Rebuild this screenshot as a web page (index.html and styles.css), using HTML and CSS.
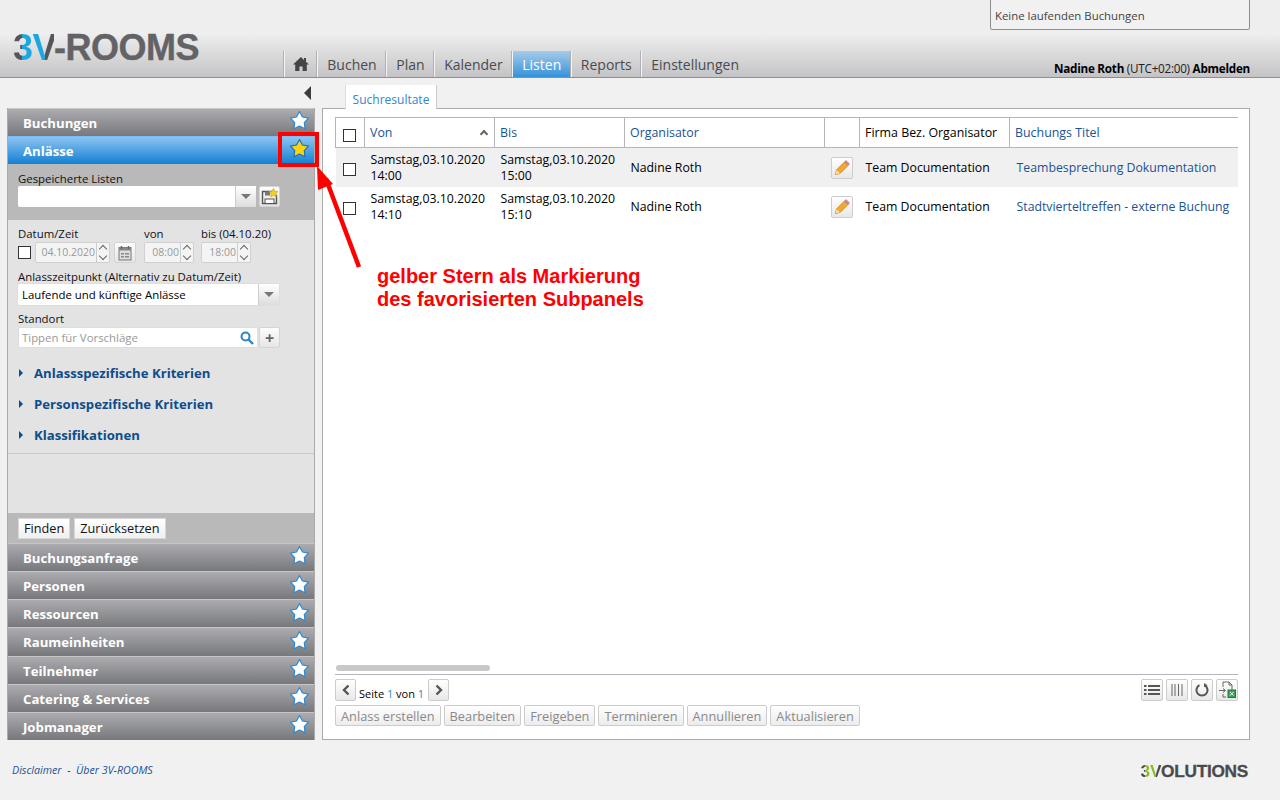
FILE: index.html
```html
<!DOCTYPE html>
<html lang="de">
<head>
<meta charset="UTF-8">
<title>3V-ROOMS</title>
<link rel="stylesheet" href="styles.css">
</head>
<body>
<svg class="defs" width="0" height="0">
  <symbol id="star" viewBox="0 0 20 20"><polygon points="10,1.500 12.820,6.620 18.560,7.720 14.560,11.980 15.290,17.780 10,15.300 4.710,17.780 5.440,11.980 1.440,7.720 7.180,6.620" stroke-width="1.100" stroke-linejoin="round"/></symbol>
  <symbol id="pencil" viewBox="0 0 16 16"><path d="M1.500 14.500l1-4.500 8-8 3.500 3.500-8 8z" fill="#f3a92f" stroke="#c9801a" stroke-width=".9"/><path d="M10.800 1.800l1.200-1.200 3.400 3.400-1.200 1.200z" fill="#d98bb0" stroke="#a86a88" stroke-width=".7"/><path d="M1.500 14.500l1-4.500 3.500 3.500z" fill="#f6dcae"/></symbol>
</svg>

<header class="top">
  <div class="logo"><span class="logo-three">3</span><span class="logo-v">V</span>-ROOMS</div>
  <nav class="nav">
    <a class="nav-item nav-home"><svg width="16" height="14" viewBox="0 0 16 14"><path d="M8 0L0 7.500h2.200V14h4.200V9.500h3.200V14h4.200V7.500H16L13 4.700V1h-2v1.900z" fill="#444"/></svg></a>
    <a class="nav-item">Buchen</a>
    <a class="nav-item">Plan</a>
    <a class="nav-item">Kalender</a>
    <a class="nav-item active">Listen</a>
    <a class="nav-item">Reports</a>
    <a class="nav-item">Einstellungen</a>
  </nav>
  <div class="user"><b>Nadine Roth</b> (UTC+02:00) <b>Abmelden</b></div>
  <div class="running">Keine laufenden Buchungen</div>
</header>

<div class="subbar">
  <div class="collapse-col"><span class="collapse"></span></div>
  <div class="tab">Suchresultate</div>
</div>

<main class="main">
  <aside class="side">
    <div class="acc"><span>Buchungen</span><svg class="star"><use href="#star"/></svg></div>
    <div class="acc acc-active"><span>Anlässe</span><svg class="star star-fav"><use href="#star"/></svg></div>

    <div class="saved">
      <label class="lbl">Gespeicherte Listen</label>
      <div class="row">
        <div class="combo combo-saved"><span class="combo-text"></span><span class="combo-btn"><i class="caret"></i></span></div>
        <button class="icon-btn save-btn">
          <svg width="18" height="18" viewBox="0 0 18 18"><path d="M1.500 3.500h9l5 4v8h-14z" fill="#eee" stroke="#555" stroke-width="1.400"/><rect x="4" y="3.500" width="5" height="4" fill="#777"/><rect x="4" y="11" width="9" height="4.500" fill="#fff" stroke="#555"/><polygon points="12.500,0.500 13.800,3.200 17,3.600 14.700,5.700 15.300,8.800 12.500,7.300 9.700,8.800 10.300,5.700 8,3.600 11.200,3.200" fill="#f7d21c" stroke="#c9a414" stroke-width=".7"/></svg>
        </button>
      </div>
    </div>

    <div class="criteria">
      <div class="date-labels">
        <label class="lbl lbl-date">Datum/Zeit</label>
        <label class="lbl lbl-von">von</label>
        <label class="lbl">bis (04.10.20)</label>
      </div>
      <div class="row date-row">
        <span class="check"></span>
        <div class="spin spin-date"><span class="spin-val">04.10.2020</span><span class="spin-btns"><i class="up"></i><i class="down"></i></span></div>
        <button class="icon-btn cal-btn">
          <svg width="14" height="16" viewBox="0 0 14 16"><rect x="1" y="2.500" width="12" height="12.500" fill="#ddd" stroke="#777"/><rect x="1" y="2.500" width="12" height="3" fill="#888"/><path d="M3.500 1v3M10.500 1v3" stroke="#666" stroke-width="1.400"/><path d="M3 8h3v1.500H3zM7 8h4v1.500H7zM3 11h3v1.500H3zM7 11h4v1.500H7z" fill="#888"/></svg>
        </button>
        <div class="spin spin-time"><span class="spin-val">08:00</span><span class="spin-btns"><i class="up"></i><i class="down"></i></span></div>
        <div class="spin spin-time spin-to"><span class="spin-val">18:00</span><span class="spin-btns"><i class="up"></i><i class="down"></i></span></div>
      </div>

      <label class="lbl lbl-next">Anlasszeitpunkt (Alternativ zu Datum/Zeit)</label>
      <div class="combo combo-wide"><span class="combo-text">Laufende und künftige Anlässe</span><span class="combo-btn"><i class="caret"></i></span></div>

      <label class="lbl lbl-next">Standort</label>
      <div class="row search-row">
        <div class="search">
          <span>Tippen für Vorschläge</span>
          <svg width="14" height="14" viewBox="0 0 14 14"><circle cx="5.500" cy="5.500" r="4" fill="none" stroke="#2b86c5" stroke-width="2"/><path d="M8.500 8.500L13 13" stroke="#2b86c5" stroke-width="2.400"/></svg>
        </div>
        <button class="icon-btn plus-btn">+</button>
      </div>

      <ul class="crit-list">
        <li><i class="tri"></i>Anlassspezifische Kriterien</li>
        <li><i class="tri"></i>Personspezifische Kriterien</li>
        <li><i class="tri"></i>Klassifikationen</li>
      </ul>
    </div>

    <div class="find-bar">
      <button class="plain-btn">Finden</button>
      <button class="plain-btn">Zurücksetzen</button>
    </div>

    <div class="acc"><span>Buchungsanfrage</span><svg class="star"><use href="#star"/></svg></div>
    <div class="acc"><span>Personen</span><svg class="star"><use href="#star"/></svg></div>
    <div class="acc"><span>Ressourcen</span><svg class="star"><use href="#star"/></svg></div>
    <div class="acc"><span>Raumeinheiten</span><svg class="star"><use href="#star"/></svg></div>
    <div class="acc"><span>Teilnehmer</span><svg class="star"><use href="#star"/></svg></div>
    <div class="acc"><span>Catering &amp; Services</span><svg class="star"><use href="#star"/></svg></div>
    <div class="acc"><span>Jobmanager</span><svg class="star"><use href="#star"/></svg></div>
  </aside>

  <section class="panel">
    <div class="table-wrap">
      <table class="grid">
        <colgroup>
          <col class="c-check"><col class="c-date"><col class="c-date"><col class="c-org"><col class="c-edit"><col class="c-firm"><col class="c-title">
        </colgroup>
        <thead>
          <tr>
            <th><span class="check"></span></th>
            <th class="link sorted">Von<i class="sort"></i></th>
            <th class="link">Bis</th>
            <th class="link">Organisator</th>
            <th></th>
            <th>Firma Bez. Organisator</th>
            <th class="link">Buchungs Titel</th>
          </tr>
        </thead>
        <tbody>
          <tr class="odd">
            <td><span class="check"></span></td>
            <td>Samstag,03.10.2020<br>14:00</td>
            <td>Samstag,03.10.2020<br>15:00</td>
            <td>Nadine Roth</td>
            <td><button class="edit-btn"><svg width="16" height="16"><use href="#pencil"/></svg></button></td>
            <td>Team Documentation</td>
            <td class="link">Teambesprechung Dokumentation</td>
          </tr>
          <tr>
            <td><span class="check"></span></td>
            <td>Samstag,03.10.2020<br>14:10</td>
            <td>Samstag,03.10.2020<br>15:10</td>
            <td>Nadine Roth</td>
            <td><button class="edit-btn"><svg width="16" height="16"><use href="#pencil"/></svg></button></td>
            <td>Team Documentation</td>
            <td class="link">Stadtvierteltreffen - externe Buchung</td>
          </tr>
        </tbody>
      </table>
    </div>
    <div class="scroll-thumb"></div>
    <div class="pager">
      <button class="page-btn"><svg width="10" height="12" viewBox="0 0 10 12"><path d="M7.500 1.500L3 6l4.500 4.500" fill="none" stroke="#555" stroke-width="2.400"/></svg></button>
      <span class="page-text">Seite <em>1</em> von <em>1</em></span>
      <button class="page-btn"><svg width="10" height="12" viewBox="0 0 10 12"><path d="M2.500 1.500L7 6l-4.500 4.500" fill="none" stroke="#555" stroke-width="2.400"/></svg></button>
      <div class="tools">
        <button class="tool-btn"><svg width="16" height="12" viewBox="0 0 16 12"><path d="M0 1h2.500v2H0zM4 1h12v2H4zM0 5h2.500v2H0zM4 5h12v2H4zM0 9h2.500v2H0zM4 9h12v2H4z" fill="#555"/></svg></button>
        <button class="tool-btn"><svg width="12" height="12" viewBox="0 0 12 12"><path d="M1 0v12M4 0v12M7.500 0v12M11 0v12" stroke="#666" stroke-width="1"/></svg></button>
        <button class="tool-btn"><svg width="14" height="14" viewBox="0 0 14 14"><path d="M4.500 2.200A5.500 5.500 0 1 0 9.500 2.200" fill="none" stroke="#555" stroke-width="2"/><path d="M9 0l.2 4.200 3.300-2z" fill="#555"/></svg></button>
        <button class="tool-btn"><svg width="18" height="18" viewBox="0 0 18 18"><path d="M5 6V1h6l3 3v5M5 13v3h3" fill="none" stroke="#666"/><path d="M11 1v3h3" fill="none" stroke="#666"/><path d="M1 9.500h6M5 7.500l2.500 2-2.500 2" fill="none" stroke="#666"/><rect x="10" y="9" width="7.500" height="7.500" fill="#3aa655" stroke="#1d7a35"/><path d="M12 11l3.500 3.500M15.500 11L12 14.500" stroke="#fff"/></svg></button>
      </div>
    </div>
    <div class="actions">
      <button class="act-btn">Anlass erstellen</button>
      <button class="act-btn">Bearbeiten</button>
      <button class="act-btn">Freigeben</button>
      <button class="act-btn">Terminieren</button>
      <button class="act-btn">Annullieren</button>
      <button class="act-btn">Aktualisieren</button>
    </div>
  </section>
</main>

<footer class="foot">
  <div class="foot-links"><a>Disclaimer</a> &nbsp;-&nbsp; <a>Über 3V-ROOMS</a></div>
  <div class="foot-logo"><span class="foot-three">3</span><span class="foot-v">V</span>OLUTIONS</div>
</footer>

<!-- annotation lying over the screenshot -->
<div class="mark"></div>
<svg class="arrow" width="70" height="110" viewBox="0 0 70 110"><path d="M45 102L12 14" stroke="#f00" stroke-width="4.500"/><polygon points="3,1 19,19 4,25" fill="#f00"/></svg>
<div class="note">gelber Stern als Markierung<br>des favorisierten Subpanels</div>
</body>
</html>
```

FILE: styles.css
```css
* {
  box-sizing: border-box;
}
html, body {
  height: 100%;
}
body {
  margin: 0;
  background-color: #f1f1f1;
  color: #000;
  font-family: "Open Sans", "Noto Sans", sans-serif;
  font-size: 12px;
  overflow: hidden;
}
button {
  font-family: inherit;
  padding: 0;
  cursor: pointer;
}
.defs {
  position: absolute;
}

/* Header */
.top {
  position: relative;
  height: 78px;
  display: flex;
  align-items: flex-end;
  border-bottom: 1px solid #8e8e8e;
  background: linear-gradient(#eeeeef 0, #eeeeef 34px, #c4c4c6 77px);
}
.logo {
  width: 284px;
  margin-bottom: 10px;
  padding-left: 13px;
  font-family: "Liberation Sans", sans-serif;
  font-size: 36px;
  line-height: 39px;
  font-weight: 700;
  color: #636366;
  letter-spacing: -.5px;
  -webkit-text-stroke: .4px #636366;
}
.logo-three {
  background: linear-gradient(90deg, #55555a 45%, #1ca7e0 45%);
  -webkit-background-clip: text;
  background-clip: text;
  color: transparent;
  -webkit-text-stroke: 0;
}
.logo-v {
  background: linear-gradient(90deg, #1ca7e0 55%, #55555a 55%);
  -webkit-background-clip: text;
  background-clip: text;
  color: transparent;
  -webkit-text-stroke: 0;
}
.nav {
  display: flex;
  height: 26px;
}
.nav-item {
  display: flex;
  align-items: center;
  padding: 0 9.300px;
  font-size: 14px;
  color: #4b4b4f;
  border-left: 1px solid #f4f4f4;
  box-shadow: -1px 0 0 #b0b0b2;
}
.nav-home {
  width: 33px;
  justify-content: center;
  padding: 0;
}
.active {
  color: #fff;
  background: linear-gradient(#a6cceb, #3592da);
}
.user {
  margin-left: auto;
  margin-right: 30px;
  margin-bottom: 1px;
  font-size: 11.700px;
  line-height: 16px;
  color: #222;
  letter-spacing: -.25px;
}
.user b {
  color: #000;
}
.running {
  position: absolute;
  top: -6px;
  right: 30px;
  width: 260px;
  height: 36px;
  padding: 13px 0 0 4px;
  font-size: 11.400px;
  line-height: 16px;
  color: #444;
  background-color: #f1f1f1;
  border: 1px solid #8e8e8e;
  border-radius: 2px;
}

/* Row with collapse arrow and tab */
.subbar {
  display: flex;
  height: 30px;
  padding-top: 7px;
}
.collapse-col {
  width: 345px;
  display: flex;
  padding: 1px 0 0 304px;
}
.collapse {
  width: 0;
  height: 0;
  border-style: solid;
  border-width: 7px 7px 7px 0;
  border-color: transparent #3c3c3c transparent transparent;
}
.tab {
  width: 92px;
  height: 24px;
  padding-top: 6px;
  text-align: center;
  color: #2f86d0;
  background-color: #fff;
  border-left: 1px solid #ddd;
  border-right: 1px solid #ccc;
  position: relative;
  z-index: 1;
}

/* Left column */
.main {
  display: flex;
  gap: 7px;
  height: 632px;
  padding-left: 7px;
}
.side {
  width: 308px;
  display: flex;
  flex-direction: column;
  border: solid #aaa;
  border-width: 0 1px;
  background-color: #e3e3e4;
}
.acc {
  height: 28.170px;
  flex: none;
  display: flex;
  align-items: center;
  justify-content: space-between;
  padding: 0 4px 0 15px;
  border-top: 1px solid #c5c5c7;
  background: linear-gradient(#acacb0, #77787c);
  color: #fff;
  font-weight: 700;
  font-size: 13.200px;
}
.find-bar ~ .acc {
  padding-top: 1px;
}
.acc-active {
  border-top-color: #7dbcf0;
  background: linear-gradient(#8cc4f2, #1380d2);
}
.star {
  width: 21px;
  height: 21px;
  margin-top: -4px;
  fill: #fff;
  stroke: #2c86d0;
}
.star-fav {
  fill: #fbd30f;
  stroke: #1d6fb5;
}
.saved {
  height: 56px;
  flex: none;
  padding: 8px 10px 0;
  background-color: #b9b9b9;
}
.lbl {
  display: block;
  font-size: 11.400px;
  line-height: 14px;
  color: #111;
}
.row {
  display: flex;
  align-items: center;
}
.combo {
  display: flex;
  height: 21px;
  background-color: #fff;
  border-radius: 2px;
}
.combo-text {
  flex: 1;
  padding-left: 4px;
  font-size: 11.400px;
  line-height: 22px;
}
.combo-btn {
  width: 21px;
  display: flex;
  align-items: center;
  justify-content: center;
  border-left: 1px solid #ccc;
  background: linear-gradient(#fff, #ddd);
}
.caret {
  width: 0;
  height: 0;
  border-style: solid;
  border-width: 5px 5px 0;
  border-color: #777 transparent transparent;
}
.combo-saved {
  width: 238px;
}
.icon-btn {
  height: 21px;
  display: flex;
  align-items: center;
  justify-content: center;
  border: 1px solid #d4d4d4;
  border-radius: 2px;
  background: linear-gradient(#fdfdfd, #e6e6e6);
}
.save-btn {
  width: 21px;
  margin-left: 3px;
}
.criteria {
  flex: 1;
  min-height: 0;
  padding: 7px 10px 0;
}
.date-labels {
  display: flex;
}
.lbl-date {
  width: 126px;
}
.lbl-von {
  width: 57px;
}
.check {
  display: inline-block;
  width: 13px;
  height: 13px;
  border: 1px solid #333;
  background-color: #fff;
  vertical-align: middle;
}
.date-row {
  height: 21px;
  margin-top: 1px;
}
.spin {
  display: flex;
  flex: none;
  height: 21px;
  background-color: #f4f4f4;
  border: 1px solid #d0d0d0;
  border-radius: 2px;
  color: #999;
  font-size: 10.500px;
}
.spin-val {
  flex: 1;
  line-height: 19px;
  text-align: right;
  padding-right: 1px;
}
.spin-btns {
  width: 13px;
  display: flex;
  flex-direction: column;
  border-left: 1px solid #ccc;
}
.spin-btns i {
  flex: 1;
  position: relative;
}
.up::before, .down::before {
  content: "";
  position: absolute;
  left: 3px;
  width: 5px;
  height: 5px;
  border: solid #666;
  border-width: 1.500px 0 0 1.500px;
  transform: rotate(45deg);
  top: 3px;
}
.down::before {
  transform: rotate(225deg);
  top: 0;
}
.spin-date {
  width: 75px;
  margin-left: 4px;
}
.cal-btn {
  width: 22px;
  margin-left: 4px;
}
.spin-time {
  width: 50px;
  margin-left: 8px;
}
.spin-to {
  margin-left: 7px;
}
.lbl-next {
  margin-top: 7px;
}
.combo-wide {
  width: 261px;
  box-shadow: 0 0 0 1px #ddd;
}
.search-row {
  margin-top: 1px;
}
.search {
  width: 240px;
  height: 21px;
  display: flex;
  align-items: center;
  justify-content: space-between;
  padding: 0 3px 0 3px;
  background-color: #fff;
  border: 1px solid #ddd;
  border-radius: 2px;
  color: #999;
  font-size: 11.400px;
}
.plus-btn {
  width: 21px;
  margin-left: 1px;
  font-size: 16px;
  font-weight: 700;
  line-height: 16px;
  color: #666;
}
.crit-list {
  list-style: none;
  margin: 9px -10px 0;
  padding: 0 0 0 11px;
  height: 97px;
  border-bottom: 1px solid #ccc;
  color: #0f4d8a;
  font-size: 13.150px;
  font-weight: 700;
}
.crit-list li {
  display: flex;
  align-items: center;
  height: 31px;
}
.tri {
  width: 0;
  height: 0;
  margin-right: 11px;
  border-style: solid;
  border-width: 4px 0 4px 4px;
  border-color: transparent transparent transparent #0f4d8a;
}
.find-bar {
  height: 30px;
  flex: none;
  display: flex;
  gap: 4px;
  align-items: center;
  padding: 1px 10px 0;
  background-color: #b9b9b9;
}
.plain-btn {
  height: 21px;
  padding: 0 5px;
  font-size: 12.700px;
  color: #111;
  background: linear-gradient(#fff, #f0f0f0);
  border: 1px solid #d8d8d8;
}

/* Result panel */
.panel {
  width: 928px;
  display: flex;
  flex-direction: column;
  padding: 8px 11px 12px 12px;
  background-color: #fff;
  border: 1px solid #aaa;
}
.table-wrap {
  flex: 1;
}
.grid {
  width: 903px;
  table-layout: fixed;
  border-collapse: collapse;
  font-size: 12.400px;
}
.c-check { width: 29px; }
.c-date { width: 130px; }
.c-org { width: 200px; }
.c-edit { width: 35px; }
.c-firm { width: 150px; }
th {
  height: 30px;
  padding: 0 5px;
  text-align: left;
  font-weight: 400;
  border: 1px solid #b4b4bc;
}
th:last-child {
  border-right: 0;
}
th:first-child {
  text-align: center;
  padding: 4px 1px 0 0;
}
td:first-child {
  text-align: center;
  padding: 4px 1px 0 0;
}
td {
  height: 39px;
  padding: 2px 6px 0;
  font-size: 12.300px;
  line-height: 16px;
}
td:last-child {
  padding-left: 7px;
}
tr.odd td {
  background-color: #f0f0f0;
}
.link {
  color: #1a5296;
}
.sorted {
  position: relative;
}
.sort {
  position: absolute;
  right: 7px;
  top: 13px;
  width: 6px;
  height: 6px;
  border: solid #666;
  border-width: 2px 0 0 2px;
  transform: rotate(45deg);
}
.edit-btn {
  width: 22px;
  height: 22px;
  display: flex;
  align-items: center;
  justify-content: center;
  border: 1px solid #ccc;
  border-radius: 2px;
  background: linear-gradient(#fff, #e8e8e8);
}
.scroll-thumb {
  width: 154px;
  height: 6px;
  margin: 0 0 3px 1px;
  border-radius: 3px;
  background-color: #c8c8c8;
}
.pager {
  display: flex;
  align-items: flex-start;
  height: 31px;
  padding-top: 4px;
  border-top: 1px solid #b4b4bc;
}
.page-btn {
  width: 21px;
  height: 22px;
  display: flex;
  align-items: center;
  justify-content: center;
  border: 1px solid #ccc;
  border-radius: 2px;
  background: linear-gradient(#fff, #e8e8e8);
}
.page-text {
  margin: 7px 4px 0 3px;
  font-size: 11px;
  line-height: 15px;
}
.page-text em {
  font-style: normal;
  color: #2f86d0;
}
.tools {
  margin-left: auto;
  display: flex;
  gap: 3px;
}
.tool-btn {
  width: 22px;
  height: 22px;
  display: flex;
  align-items: center;
  justify-content: center;
  border: 1px solid #ccc;
  border-radius: 2px;
  background: linear-gradient(#fff, #e8e8e8);
}
.actions {
  display: flex;
  gap: 3px;
  margin-bottom: 1px;
}
.act-btn {
  height: 21px;
  padding: 0 5px;
  font-size: 12.800px;
  color: #8a8a8a;
  background: linear-gradient(#fff, #ececec);
  border: 1px solid #ccc;
  border-radius: 2px;
}

/* Footer */
.foot {
  display: flex;
  justify-content: space-between;
  align-items: center;
  height: 60px;
  padding: 0 32px 0 12px;
}
.foot-links {
  font-size: 10.700px;
  font-style: italic;
  color: #1a5296;
}
.foot-logo {
  margin-top: 3px;
  font-family: "Liberation Sans", sans-serif;
  font-size: 17.300px;
  font-weight: 700;
  color: #4a4a4d;
  letter-spacing: -.3px;
  -webkit-text-stroke: .3px #4a4a4d;
}
.foot-three {
  background: linear-gradient(90deg, #4a4a4d 45%, #8cbb1e 45%);
  -webkit-background-clip: text;
  background-clip: text;
  color: transparent;
  -webkit-text-stroke: 0;
}
.foot-v {
  background: linear-gradient(90deg, #8cbb1e 55%, #4a4a4d 55%);
  -webkit-background-clip: text;
  background-clip: text;
  color: transparent;
  -webkit-text-stroke: 0;
}

/* Annotation */
.mark {
  position: absolute;
  left: 278px;
  top: 132px;
  width: 41px;
  height: 35px;
  border: 4px solid #f00;
}
.arrow {
  position: absolute;
  left: 314px;
  top: 165px;
}
.note {
  position: absolute;
  left: 377px;
  top: 265px;
  font-family: "Liberation Sans", sans-serif;
  font-size: 20px;
  line-height: 23px;
  font-weight: 700;
  color: #f00;
}
```
